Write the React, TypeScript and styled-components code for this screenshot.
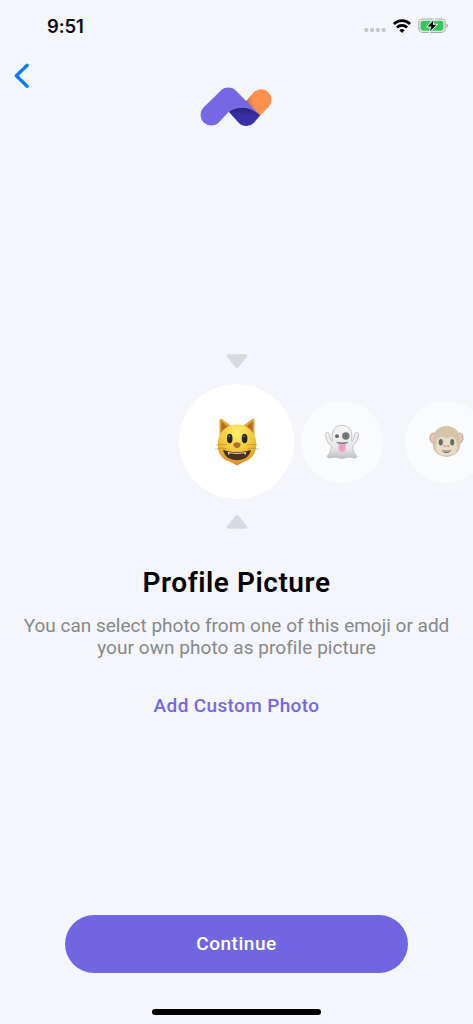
import React from "react";
import styled, { createGlobalStyle } from "styled-components";

const Global = createGlobalStyle`
  * { box-sizing: border-box; }
  body { margin: 0; background: #f4f6fb; overflow: hidden; }
  svg { display: block; flex: none; }
`;

const Screen = styled.main`
  width: 473px;
  height: 1024px;
  display: flex;
  flex-direction: column;
  align-items: center;
  background: #f4f6fb;
  overflow: hidden;
  font-family: Roboto, "Liberation Sans", sans-serif;
`;

const StatusBar = styled.div`
  width: 100%;
  height: 52px;
  padding: 0 24px 0 47px;
  display: flex;
  align-items: center;
  justify-content: space-between;
`;

const Clock = styled.span`
  font: 600 18.5px/22px Inter, sans-serif;
  letter-spacing: -0.15px;
  color: #0b0b0d;
`;

const StatusIcons = styled.div`
  display: flex;
  align-items: center;
  gap: 7px;
`;

const Header = styled.header`
  width: 100%;
  height: 84px;
  display: grid;
  grid-template-columns: 190px 92px 1fr;
  align-items: start;
`;

const BackButton = styled.button`
  width: 44px;
  height: 48px;
  padding: 0;
  border: 0;
  background: none;
`;

const LogoBox = styled.div`
  padding-top: 24px;
`;

const Picker = styled.section`
  width: 100%;
  margin-top: 218px;
  display: flex;
  flex-direction: column;
  align-items: center;
`;

const Carousel = styled.div`
  width: 100%;
  height: 115px;
  margin: 15px 0;
  padding-left: 179px;
  display: flex;
  align-items: center;
  overflow: hidden;
`;

const Avatar = styled.div<{ $size: number; $active?: boolean; $gap?: number }>`
  flex: none;
  width: ${(p) => p.$size}px;
  height: ${(p) => p.$size}px;
  margin-left: ${(p) => p.$gap ?? 0}px;
  display: flex;
  align-items: center;
  justify-content: center;
  border-radius: 50%;
  background: ${(p) => (p.$active ? "#fff" : "#fafbfd")};
`;

const Title = styled.h1`
  margin: 36px 0 0;
  font-size: 28px;
  line-height: 36px;
  font-weight: 600;
  letter-spacing: 0.55px;
  color: #000;
`;

const Description = styled.p`
  margin: 14px 0 0;
  text-align: center;
  white-space: nowrap;
  font-size: 19px;
  line-height: 22px;
  color: #88888a;
`;

const Line = styled.span<{ $spacing: number }>`
  display: block;
  letter-spacing: ${(p) => p.$spacing}px;
`;

const LinkButton = styled.button`
  margin-top: 35px;
  padding: 0;
  border: 0;
  background: none;
  font: 500 19px/24px Roboto, sans-serif;
  letter-spacing: 0.36px;
  color: #7467e4;
`;

const ContinueButton = styled.button`
  width: 343px;
  height: 57.5px;
  margin-top: auto;
  padding: 1px 0 0;
  border: 0;
  border-radius: 29px;
  background: #7166e2;
  color: #fff;
  font: 500 19px/24px Roboto, sans-serif;
  letter-spacing: 0.55px;
`;

const HomeIndicator = styled.div`
  flex: none;
  width: 169px;
  height: 6px;
  margin: 36.5px 0 9px;
  border-radius: 3px;
  background: #000;
`;

const SignalDots = () => (
  <svg width="22" height="12" viewBox="0 0 22 12" fill="#c6c7cb">
    {[0, 5.8, 11.6, 17.4].map((x) => (
      <rect key={x} x={x + 0.3} y="8" width="4" height="4" rx="1.4" />
    ))}
  </svg>
);

const Wifi = () => (
  <svg width="18" height="14" viewBox="0 0 18 14" fill="none" stroke="#000" strokeWidth="2.7">
    <path d="M.9 4.9a11.8 11.8 0 0 1 16.2 0" />
    <path d="M3.9 8.4a7.5 7.5 0 0 1 10.2 0" />
    <path d="M6.4 11.2a4 4 0 0 1 5.2 0L9 13.9Z" fill="#000" stroke="none" />
  </svg>
);

const Battery = () => (
  <svg width="31" height="16" viewBox="0 0 31 16">
    <rect x=".8" y="1" width="26.4" height="13.4" rx="4" fill="none" stroke="#a6a7ab" strokeWidth="1.1" />
    <rect x="2.5" y="2.7" width="23" height="10" rx="2.4" fill="#35c759" />
    <path d="M28.4 5.5c2 .6 2 3.800 0 4.400Z" fill="#a6a7ab" />
    <path d="M15.5 2.2 9.7 8.5h3.500L12 13.400l6.300-6.700h-3.500Z" fill="#000" stroke="#f4f6fb" strokeWidth="1.8" paintOrder="stroke" />
  </svg>
);

const Chevron = () => (
  <svg width="44" height="48" viewBox="0 0 44 48" fill="none" stroke="#087cff" strokeWidth="3.3" strokeLinecap="round" strokeLinejoin="round">
    <path d="M27.2 13.3 16.3 23.7 27.2 34.2" />
  </svg>
);

const Logo = () => (
  <svg width="92" height="60" viewBox="0 0 276 180">
    <defs>
      <linearGradient id="orange" x1="170" y1="88" x2="211" y2="80" gradientUnits="userSpaceOnUse">
        <stop offset="0" stopColor="#b96c43" />
        <stop offset=".55" stopColor="#ff914e" />
      </linearGradient>
      <linearGradient id="navy" x1="160" y1="93" x2="160" y2="122" gradientUnits="userSpaceOnUse">
        <stop offset="0" stopColor="#292371" />
        <stop offset="1" stopColor="#3730a7" />
      </linearGradient>
    </defs>
    <path d="M167 77 191 49a31 31 0 0 1 44 45l-25 25Z" fill="url(#orange)" />
    <path d="M116 107c24-19 65-20 95 11l-18 21a32 32 0 0 1-47 1Z" fill="url(#navy)" />
    <path d="m41 94 51-50a32 32 0 0 1 46 0l73 74c-29-26-66-29-93-12l-31 33a32 32 0 0 1-46-45Z" fill="#7568e3" />
  </svg>
);

const Pointer = ({ up = false }: { up?: boolean }) => (
  <svg width="22" height="15" viewBox="0 0 22 15" fill="#d7dae3">
    <path
      transform={up ? "rotate(180 11 7.5)" : undefined}
      d="M2.2.2h17.6c1.5 0 2 1.7 1 2.8l-8 10c-1 1.2-2.600 1.200-3.600 0l-8-10c-1-1.100-.5-2.800 1-2.800Z"
    />
  </svg>
);

const CatFace = () => (
  <svg width="46" height="50" viewBox="0 0 46 50">
    <defs>
      <radialGradient id="fur" cx=".5" cy=".2" r=".82">
        <stop offset="0" stopColor="#fff06c" />
        <stop offset=".5" stopColor="#f4cb3c" />
        <stop offset=".82" stopColor="#e4a72c" />
        <stop offset="1" stopColor="#dd7a35" />
      </radialGradient>
    </defs>
    <path d="M5.5 19V3.4c0-1.800 1.700-2 3-1l8 6ZM40.5 19V3.4c0-1.800-1.700-2-3-1l-8 6Z" fill="#dda42f" />
    <path d="M7.3 16V4.5l6.500 5.300ZM38.700 16V4.500l-6.500 5.300Z" fill="#b66c27" />
    <path d="M23 7.500C12.500 7.500 5 14.500 4 24.500c-1.300 10.800 3.500 17.500 11.800 20.300 3 1 5.200 3.400 7.200 3.400s4.200-2.400 7.200-3.400C38.500 42 43.300 35.300 42 24.500 41 14.500 33.500 7.500 23 7.500Z" fill="url(#fur)" />
    <g fill="#27251f">
      <ellipse cx="15.7" cy="21.5" rx="2.8" ry="4.7" />
      <ellipse cx="30.6" cy="21.5" rx="2.8" ry="4.7" />
    </g>
    <g fill="#77766a">
      <circle cx="15.4" cy="19.5" r=".9" />
      <circle cx="30.3" cy="19.5" r=".9" />
    </g>
    <path d="M9.200 32.700c7.200 3.100 20.400 3.100 27.600 0C36 39.700 29.800 43.200 23 43.200S10 39.700 9.200 32.700Z" fill="#49301f" />
    <path d="M13.600 34.700c5.300 1.400 13.500 1.400 18.800 0l-.8 3.200-1.700-1.600c-4.700.9-9.100.9-13.800 0l-1.700 1.600Z" fill="#d9ceb6" />
    <path d="M19.700 26.300c1.200-1.200 5.400-1.200 6.600 0 1 2.100-1 4.800-3.300 4.800s-4.300-2.700-3.300-4.800Z" fill="#a36d3c" />
    <path d="M2.500 28q5-1.500 10.500 0M1 32.500q5.500-2.300 11.500-1M43.500 28q-5-1.500-10.500 0M45 32.500q-5.500-2.300-11.500-1" fill="none" stroke="#97743d" strokeWidth=".8" opacity=".6" />
  </svg>
);

const Ghost = () => (
  <svg width="36" height="36" viewBox="0 0 36 36">
    <defs>
      <linearGradient id="sheet" x1="0" y1="0" x2="0" y2="1">
        <stop offset="0" stopColor="#f4f4f4" />
        <stop offset=".7" stopColor="#e7e7e8" />
        <stop offset="1" stopColor="#bfc0c1" />
      </linearGradient>
    </defs>
    <path
      d="M18 1.300c-6.500 0-9.800 4.500-9.800 10.500v5.500C6.500 15.700 6 13 5.200 9.800 4.700 7.600 1 8.200 1.400 10.500c.7 5 2.500 9 6 11.500-.2 4.500-1.500 7.500-3.900 9.800-1.200 1.600 1.600 2.600 3.400 2.100 2.400-1 4.500-1 6.800-.3 2.900 1 5.700 1 8.600 0 2.300-.7 4.400-.7 6.800.3 1.800.5 4.600-.5 3.400-2.100-2.400-2.300-3.700-5.300-3.900-9.800 3.500-2.500 5.300-6.500 6-11.500.4-2.300-3.300-2.900-3.800-.7-.8 3.200-1.300 5.900-3 7.500v-5.500c0-6-3.300-10.500-9.800-10.500Z"
      fill="url(#sheet)" stroke="#bcbdc0" strokeWidth=".9"
    />
    <circle cx="13" cy="12.2" r="1.9" fill="#636468" />
    <circle cx="21.8" cy="12" r="3.7" fill="#737478" />
    <circle cx="21.8" cy="12" r="1.5" fill="#4b4c4e" stroke="#a2a3a5" strokeWidth=".6" />
    <path d="M12 17.800q6 1.200 12.400 0c-.8 3-10.900 3.200-12.400 0Z" fill="#76767a" />
    <path d="M14.500 19.700q3.500 1 7.200 0v4.800c0 4.500-7.200 4.500-7.200 0Z" fill="#f1a1c8" />
    <path d="M18 21v4" stroke="#d989ae" strokeWidth=".7" />
  </svg>
);

const Monkey = () => (
  <svg width="35" height="33" viewBox="0 0 35 33">
    <ellipse cx="4.7" cy="13" rx="4.3" ry="5.5" fill="#c7b49e" />
    <ellipse cx="30.3" cy="13" rx="4.3" ry="5.5" fill="#c7b49e" />
    <ellipse cx="4.7" cy="13" rx="2.8" ry="4" fill="#efc6c5" />
    <ellipse cx="30.3" cy="13" rx="2.8" ry="4" fill="#efc6c5" />
    <path d="M17.500 1C10 1 4 6 4 14c-1.500 9 1.500 15 9 17 3 1.300 6 1.300 9 0 7.500-2 10.500-8 9-17C31 6 25 1 17.500 1Z" fill="#d4c4a9" />
    <path d="M17.500 13.500C13 9.500 7 12.500 7.500 18c-3 7 1.500 12.500 10 12.500s13-5.500 10-12.500c.5-5.500-5.500-8.500-10-4.500Z" fill="#e9dcc5" />
    <g fill="#66696a">
      <ellipse cx="11.8" cy="17.2" rx="2" ry="3.2" />
      <ellipse cx="23.2" cy="17.2" rx="2" ry="3.2" />
    </g>
    <path d="M15 21h1.500M18.500 21H20" stroke="#927f70" strokeWidth="1" strokeLinecap="round" />
    <path d="M13 25q4.500.8 9 0c-.5 4.100-8.500 4.100-9 0Z" fill="#786b69" />
    <path d="M14 25.500q3.500.7 7 0l-.5 1h-6Z" fill="#e8dfd6" />
  </svg>
);

export default function App() {
  return (
    <Screen>
      <Global />
      <StatusBar>
        <Clock>9:51</Clock>
        <StatusIcons>
          <SignalDots />
          <Wifi />
          <Battery />
        </StatusIcons>
      </StatusBar>
      <Header>
        <BackButton aria-label="Back"><Chevron /></BackButton>
        <LogoBox><Logo /></LogoBox>
      </Header>
      <Picker>
        <Pointer />
        <Carousel>
          <Avatar $size={115} $active><CatFace /></Avatar>
          <Avatar $size={82} $gap={7}><Ghost /></Avatar>
          <Avatar $size={82} $gap={22}><Monkey /></Avatar>
        </Carousel>
        <Pointer up />
      </Picker>
      <Title>Profile Picture</Title>
      <Description>
        <Line $spacing={0}>You can select photo from one of this emoji or add</Line>
        <Line $spacing={0.06}>your own photo as profile picture</Line>
      </Description>
      <LinkButton>Add Custom Photo</LinkButton>
      <ContinueButton>Continue</ContinueButton>
      <HomeIndicator />
    </Screen>
  );
}
